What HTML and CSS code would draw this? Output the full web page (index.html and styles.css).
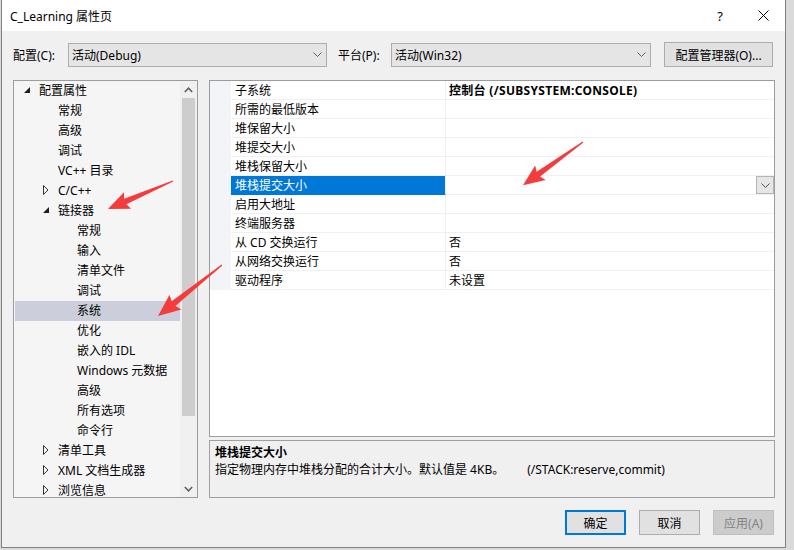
FILE: index.html
```html
<!DOCTYPE html>
<html lang="zh-CN">
<head>
<meta charset="utf-8">
<title>C_Learning 属性页</title>
<link rel="stylesheet" href="styles.css">
</head>
<body>
<div class="dialog">
  <div class="titlebar">
    <span class="title">C_Learning 属性页</span>
    <div class="tb-btns">
      <span class="help">?</span>
      <svg class="close" width="11" height="11" viewBox="0 0 11 11"><path d="M0.5 0.5 L10.5 10.5 M10.5 0.5 L0.5 10.5" stroke="#000" stroke-width="1" fill="none"/></svg>
    </div>
  </div>

  <div class="toolbar">
    <span class="lbl lbl1">配置(C):</span>
    <div class="combo combo1"><span>活动(Debug)</span><svg class="chev" width="9" height="5" viewBox="0 0 9 5"><polyline points="0.5,0.5 4.5,4.5 8.5,0.5" fill="none" stroke="#606060" stroke-width="1"/></svg></div>
    <span class="lbl lbl2">平台(P):</span>
    <div class="combo combo2"><span>活动(Win32)</span><svg class="chev" width="9" height="5" viewBox="0 0 9 5"><polyline points="0.5,0.5 4.5,4.5 8.5,0.5" fill="none" stroke="#606060" stroke-width="1"/></svg></div>
    <div class="btn btn-cfg">配置管理器(O)...</div>
  </div>

  <div class="main">
    <div class="tree">
      <div class="tree-list">
        <div class="row l1"><span class="tog"><svg width="7" height="7" viewBox="0 0 7 7"><polygon points="6,0 6,6 0,6" fill="#1e1e1e"/></svg></span>配置属性</div>
        <div class="row l2"><span class="tog"></span>常规</div>
        <div class="row l2"><span class="tog"></span>高级</div>
        <div class="row l2"><span class="tog"></span>调试</div>
        <div class="row l2"><span class="tog"></span>VC++ 目录</div>
        <div class="row l2"><span class="tog"><svg width="7" height="10" viewBox="0 0 7 10"><polygon points="0.5,0.5 5,5 0.5,9.5" fill="none" stroke="#333" stroke-width="1"/></svg></span>C/C++</div>
        <div class="row l2"><span class="tog"><svg width="7" height="7" viewBox="0 0 7 7"><polygon points="6,0 6,6 0,6" fill="#1e1e1e"/></svg></span>链接器</div>
        <div class="row l3">常规</div>
        <div class="row l3">输入</div>
        <div class="row l3">清单文件</div>
        <div class="row l3">调试</div>
        <div class="row l3 sel">系统</div>
        <div class="row l3">优化</div>
        <div class="row l3">嵌入的 IDL</div>
        <div class="row l3">Windows 元数据</div>
        <div class="row l3">高级</div>
        <div class="row l3">所有选项</div>
        <div class="row l3">命令行</div>
        <div class="row l2"><span class="tog"><svg width="7" height="10" viewBox="0 0 7 10"><polygon points="0.5,0.5 5,5 0.5,9.5" fill="none" stroke="#333" stroke-width="1"/></svg></span>清单工具</div>
        <div class="row l2"><span class="tog"><svg width="7" height="10" viewBox="0 0 7 10"><polygon points="0.5,0.5 5,5 0.5,9.5" fill="none" stroke="#333" stroke-width="1"/></svg></span>XML 文档生成器</div>
        <div class="row l2"><span class="tog"><svg width="7" height="10" viewBox="0 0 7 10"><polygon points="0.5,0.5 5,5 0.5,9.5" fill="none" stroke="#333" stroke-width="1"/></svg></span>浏览信息</div>
      </div>
      <div class="scroll">
        <div class="sbtn"><svg width="9" height="6" viewBox="0 0 9 6"><polyline points="0.8,5 4.5,1.2 8.2,5" fill="none" stroke="#606060" stroke-width="1.6"/></svg></div>
        <div class="thumb"></div>
        <div class="track"></div>
        <div class="sbtn"><svg width="9" height="6" viewBox="0 0 9 6"><polyline points="0.8,1 4.5,4.8 8.2,1" fill="none" stroke="#606060" stroke-width="1.6"/></svg></div>
      </div>
    </div>

    <div class="right">
      <div class="grid">
        <div class="prow"><span class="gut"></span><span class="pname">子系统</span><span class="pval bold">控制台 (/SUBSYSTEM:CONSOLE)</span></div>
        <div class="prow"><span class="gut"></span><span class="pname">所需的最低版本</span><span class="pval"></span></div>
        <div class="prow"><span class="gut"></span><span class="pname">堆保留大小</span><span class="pval"></span></div>
        <div class="prow"><span class="gut"></span><span class="pname">堆提交大小</span><span class="pval"></span></div>
        <div class="prow"><span class="gut"></span><span class="pname">堆栈保留大小</span><span class="pval"></span></div>
        <div class="prow psel"><span class="gut"></span><span class="pname">堆栈提交大小</span><span class="pval"><span class="ddbtn"><svg width="9" height="5" viewBox="0 0 9 5"><polyline points="0.5,0.5 4.5,4.5 8.5,0.5" fill="none" stroke="#505050" stroke-width="1"/></svg></span></span></div>
        <div class="prow"><span class="gut"></span><span class="pname">启用大地址</span><span class="pval"></span></div>
        <div class="prow"><span class="gut"></span><span class="pname">终端服务器</span><span class="pval"></span></div>
        <div class="prow"><span class="gut"></span><span class="pname">从 CD 交换运行</span><span class="pval">否</span></div>
        <div class="prow"><span class="gut"></span><span class="pname">从网络交换运行</span><span class="pval">否</span></div>
        <div class="prow"><span class="gut"></span><span class="pname">驱动程序</span><span class="pval">未设置</span></div>
      </div>
      <div class="desc">
        <div class="desc-title">堆栈提交大小</div>
        <div class="desc-text">指定物理内存中堆栈分配的合计大小。默认值是 4KB。<span class="switch">(/STACK:reserve,commit)</span></div>
      </div>
    </div>
  </div>

  <div class="buttons">
    <div class="btn dbtn default">确定</div>
    <div class="btn dbtn">取消</div>
    <div class="btn dbtn disabled">应用(A)</div>
  </div>
</div>

<svg class="arrows" width="794" height="550" viewBox="0 0 794 550">
  <polygon transform="translate(173 181) rotate(156.7)" points="0,-0.6 52,-3 49.5,-9 70.8,0 49.5,9 52,3 0,0.6" fill="#f43c3c"/>
  <polygon transform="translate(222 265) rotate(141.45)" points="0,-0.6 62,-3 59.5,-9.5 81.8,0 59.5,9.5 62,3 0,0.6" fill="#f43c3c"/>
  <polygon transform="translate(583 142) rotate(144.2)" points="0,-0.6 55,-3 52.5,-9 74,0 52.5,9 55,3 0,0.6" fill="#f43c3c"/>
</svg>
</body>
</html>
```

FILE: styles.css
```css
html, body {
  margin: 0;
  padding: 0;
}
body {
  width: 794px;
  height: 550px;
  overflow: hidden;
  position: relative;
  background: #dadada;
  font-family: "Noto Sans", "Noto Sans CJK SC", sans-serif;
  font-size: 12px;
  color: #000;
}
.dialog {
  box-sizing: border-box;
  margin-left: 1px;
  width: 785px;
  height: 548px;
  border: 1px solid #808080;
  border-top: none;
  background: #f0f0f0;
  display: flex;
  flex-direction: column;
}
.titlebar {
  height: 31px;
  flex: none;
  background: #fff;
  display: flex;
  align-items: center;
  padding-left: 8px;
  padding-right: 16px;
}
.title {
  font-size: 12px;
}
.tb-btns {
  margin-left: auto;
  display: flex;
  align-items: center;
}
.help {
  font-size: 13px;
  margin-right: 35px;
}
.close {
  display: block;
}
.toolbar {
  display: flex;
  align-items: center;
  height: 25px;
  margin-top: 11px;
  padding-left: 11px;
}
.lbl1 { width: 55px; }
.lbl2 { width: 53px; margin-left: 11px; }
.combo {
  box-sizing: border-box;
  height: 24px;
  border: 1px solid #adadad;
  background: #e5e5e5;
  display: flex;
  align-items: center;
  padding-left: 3px;
  padding-right: 4px;
}
.combo .chev { margin-left: auto; }
.combo1 { width: 259px; }
.combo2 { width: 260px; }
.btn {
  box-sizing: border-box;
  border: 1px solid #adadad;
  background: #e1e1e1;
  display: flex;
  align-items: center;
  justify-content: center;
}
.btn-cfg {
  width: 109px;
  height: 25px;
  margin-left: 13px;
}
.main {
  display: flex;
  margin-top: 13px;
  padding-left: 11px;
  gap: 11px;
}
.tree {
  box-sizing: border-box;
  width: 185px;
  height: 418px;
  border: 1px solid #9c9c9c;
  background: #f5f5f5;
  display: flex;
}
.tree-list {
  flex: 1;
  overflow: hidden;
  padding-left: 1px;
}
.row {
  box-sizing: border-box;
  height: 20px;
  padding-bottom: 2px;
  display: flex;
  align-items: center;
  white-space: nowrap;
}
.row.l1 { padding-left: 9px; }
.row.l2 { padding-left: 28px; }
.row.l3 { padding-left: 62px; }
.tog {
  width: 15px;
  flex: none;
  display: flex;
  align-items: center;
}
.tog svg { display: block; }
.row.sel { background: #cccedb; }
.scroll {
  width: 17px;
  flex: none;
  background: #f0f0f0;
  display: flex;
  flex-direction: column;
  align-items: center;
}
.sbtn {
  height: 17px;
  width: 17px;
  display: flex;
  align-items: center;
  justify-content: center;
}
.thumb {
  width: 13px;
  height: 318px;
  background: #cdcdcd;
}
.track { flex: 1; }
.right {
  width: 566px;
  display: flex;
  flex-direction: column;
  gap: 3px;
}
.grid {
  box-sizing: border-box;
  height: 357px;
  border: 1px solid #9c9c9c;
  background: #fff;
}
.prow {
  display: flex;
  height: 19px;
}
.gut {
  width: 21px;
  flex: none;
  background: #f3f4f7;
}
.pname, .pval {
  box-sizing: border-box;
  height: 19px;
  border-bottom: 1px solid #eef0f4;
  display: flex;
  align-items: center;
  white-space: nowrap;
}
.pname {
  width: 215px;
  flex: none;
  padding-left: 4px;
  border-right: 1px solid #eef0f4;
}
.pval {
  flex: 1;
  padding-left: 3px;
}
.bold {
  font-weight: bold;
  letter-spacing: 0.3px;
}
.psel .pname {
  background: #0078d7;
  color: #fff;
  border-bottom-color: #0078d7;
}
.ddbtn {
  box-sizing: border-box;
  margin-left: auto;
  width: 18px;
  height: 18px;
  border: 1px solid #b4b4b4;
  background: #e6e6e6;
  display: flex;
  align-items: center;
  justify-content: center;
}
.desc {
  box-sizing: border-box;
  height: 58px;
  border: 1px solid #a0a0a0;
  padding: 3px 5px;
  line-height: 17px;
}
.desc-title { font-weight: bold; }
.switch { margin-left: 23px; }
.buttons {
  display: flex;
  justify-content: flex-end;
  gap: 13px;
  margin-top: 12px;
  padding-right: 11px;
}
.dbtn {
  width: 61px;
  height: 25px;
}
.dbtn.default {
  border: 2px solid #0078d7;
}
.dbtn.disabled {
  background: #cccccc;
  border-color: #bfbfbf;
  color: #838383;
}
.arrows {
  position: absolute;
  left: 0;
  top: 0;
  pointer-events: none;
}
```
